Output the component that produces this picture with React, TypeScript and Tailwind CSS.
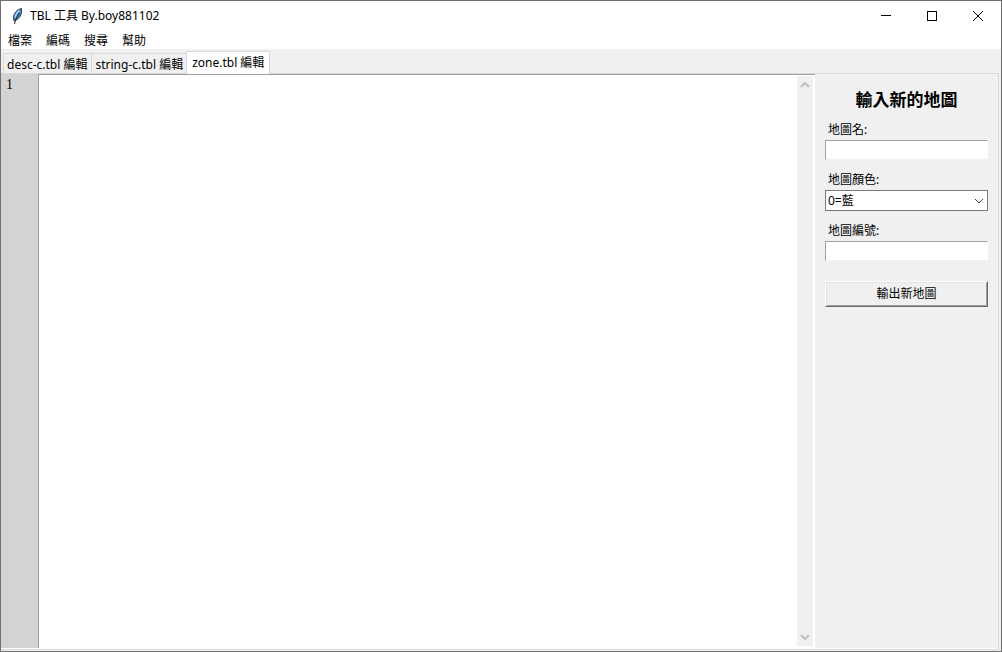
import { useState } from 'react';
import type React from 'react';

const menus = ['檔案', '編碼', '搜尋', '幫助'];
const tabs = ['desc-c.tbl 編輯', 'string-c.tbl 編輯', 'zone.tbl 編輯'];
const colors = ['0=藍', '1=紅', '2=白'];

const FeatherIcon = () => (
  <svg width="16" height="18" viewBox="0 0 16 18" aria-hidden="true">
    <path
      d="M12.5 1.5 C9.5 2 7 4 5.4 7 C4.2 9.5 4.2 12 5.2 14 C8 13 10.6 10.8 11.8 8 C12.6 5.5 12.8 3.5 12.5 1.5Z"
      fill="#4a86d0"
      stroke="#15181c"
      strokeWidth="0.8"
    />
    <path d="M10.5 3.5 C8.2 5 6.6 7.5 6 10.5" stroke="#a5cdf5" strokeWidth="1.6" fill="none" />
    <path d="M10.5 6 C8.5 9 6.4 12 5.5 17" stroke="#111" strokeWidth="0.9" fill="none" />
  </svg>
);

interface ChevronProps {
  d: string;
  className?: string;
  strokeWidth: number;
}

const Chevron: React.FC<ChevronProps> = ({ d, className, strokeWidth }) => (
  <svg
    width="10"
    height="8"
    viewBox="0 0 10 8"
    fill="none"
    stroke="currentColor"
    strokeWidth={strokeWidth}
    className={className}
    aria-hidden="true"
  >
    <path d={d} />
  </svg>
);

const TitleBar = () => (
  <header className="flex h-[29px] shrink-0 items-center bg-white pl-2">
    <FeatherIcon />
    <h1 className="ml-[5px] flex-1 text-xs">TBL 工具 By.boy881102</h1>
    <button type="button" aria-label="最小化" className="flex h-full w-[46px] items-center justify-center">
      <svg width="10" height="10" viewBox="0 0 10 10" stroke="#000" shapeRendering="crispEdges">
        <path d="M0 4.5H10" />
      </svg>
    </button>
    <button type="button" aria-label="最大化" className="flex h-full w-[46px] items-center justify-center">
      <svg width="10" height="10" viewBox="0 0 10 10" stroke="#000" fill="none" shapeRendering="crispEdges">
        <rect x="0.5" y="0.5" width="9" height="9" />
      </svg>
    </button>
    <button type="button" aria-label="關閉" className="flex h-full w-[46px] items-center justify-center">
      <svg width="10" height="10" viewBox="0 0 10 10" stroke="#000">
        <path d="M0 0L10 10M10 0L0 10" />
      </svg>
    </button>
  </header>
);

const labelStyle = 'mt-[10px] pl-[3px] leading-5';
const inputStyle =
  'h-5 w-full border border-t-[#a0a0a0] border-l-[#a0a0a0] border-r-white border-b-[#f0f0f0] bg-white px-1 outline-none';

const MapForm = () => {
  const [name, setName] = useState('');
  const [color, setColor] = useState(colors[0]);
  const [number, setNumber] = useState('');

  return (
    <form
      className="flex w-[183px] shrink-0 flex-col bg-[#f0f0f0] px-[10px] pt-4"
      onSubmit={(e) => e.preventDefault()}
    >
      <h2 className="text-center text-[17px] leading-5 font-bold">輸入新的地圖</h2>
      <label htmlFor="map-name" className={labelStyle}>
        地圖名:
      </label>
      <input id="map-name" className={inputStyle} value={name} onChange={(e) => setName(e.target.value)} />

      <label htmlFor="map-color" className={labelStyle}>
        地圖顏色:
      </label>
      <div className="relative">
        <select
          id="map-color"
          className="block h-[21px] w-full appearance-none border border-[#7a7a7a] bg-white pl-[2px] outline-none"
          value={color}
          onChange={(e) => setColor(e.target.value)}
        >
          {colors.map((c) => (
            <option key={c}>{c}</option>
          ))}
        </select>
        <Chevron
          d="M1 2L5 6L9 2"
          strokeWidth={1}
          className="pointer-events-none absolute top-[7px] right-1 text-[#404040]"
        />
      </div>

      <label htmlFor="map-number" className={labelStyle}>
        地圖編號:
      </label>
      <input id="map-number" className={inputStyle} value={number} onChange={(e) => setNumber(e.target.value)} />

      <button
        type="submit"
        className="mt-5 h-[26px] border border-t-white border-r-[#696969] border-b-[#696969] border-l-white shadow-[inset_1px_1px_0_#e3e3e3,inset_-1px_-1px_0_#a0a0a0]"
      >
        輸出新地圖
      </button>
    </form>
  );
};

export default function App() {
  const [activeTab, setActiveTab] = useState(2);
  const [text, setText] = useState('');
  const lineCount = text.split('\n').length;

  return (
    <div className="flex h-screen flex-col border border-[#707070] bg-[#f0f0f0] font-['Noto_Sans','Noto_Sans_CJK_TC',sans-serif] text-xs text-black">
      <TitleBar />
      <nav className="flex h-[19px] shrink-0 gap-[14px] bg-white pl-[7px]">
        {menus.map((menu) => (
          <button key={menu} type="button" className="pt-px leading-5">
            {menu}
          </button>
        ))}
      </nav>

      <div role="tablist" className="flex h-6 shrink-0 items-end pl-[2px]">
        {tabs.map((tab, i) => (
          <button
            key={tab}
            type="button"
            role="tab"
            aria-selected={i === activeTab}
            onClick={() => setActiveTab(i)}
            className={
              i === activeTab
                ? 'z-10 -mb-px -ml-px h-[23px] border-x border-t border-[#d9d9d9] bg-white px-[5px]'
                : 'h-5 border-t border-l border-[#d9d9d9] pt-[2px] pr-1 pl-[3px]'
            }
          >
            {tab}
          </button>
        ))}
      </div>

      <main className="mr-[2px] mb-px flex min-h-0 flex-1 border-t border-r border-b border-[#d9d9d9] bg-white pb-px">
        <div className="w-[37px] shrink-0 bg-[#d3d3d3] pt-[3px] pl-[5px] font-['Liberation_Serif',serif] text-sm leading-4">
          {Array.from({ length: lineCount }, (_, i) => (
            <div key={i}>{i + 1}</div>
          ))}
        </div>
        <div className="flex min-w-0 flex-1 border-t border-l border-[#a0a0a0] pr-[2px]">
          <textarea
            aria-label={tabs[activeTab]}
            className="min-w-0 flex-1 resize-none overflow-hidden bg-white px-1 pt-[2px] font-['Liberation_Serif','Noto_Sans_CJK_TC',serif] text-sm leading-4 outline-none"
            value={text}
            onChange={(e) => setText(e.target.value)}
          />
          <div className="mt-px mb-[2px] flex w-4 flex-col items-center justify-between bg-[#f0f0f0] py-[5px] text-[#bfbfbf]">
            <Chevron d="M1 6L5 2L9 6" strokeWidth={2} />
            <Chevron d="M1 2L5 6L9 2" strokeWidth={2} />
          </div>
        </div>
        <MapForm />
      </main>
    </div>
  );
}
